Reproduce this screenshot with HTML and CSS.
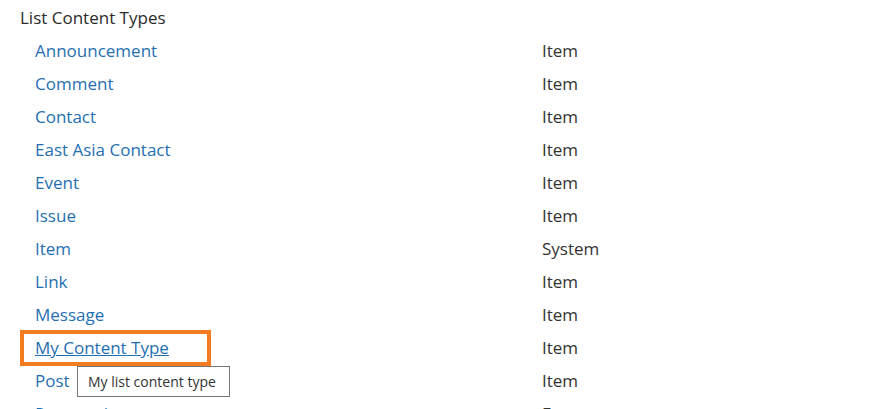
FILE: index.html
```html
<!DOCTYPE html>
<html>
<head>
<meta charset="utf-8">
<link rel="stylesheet" href="styles.css">
</head>
<body>
<div class="page">
  <h2 class="title">List Content Types</h2>
  <div class="table">
    <div class="row"><a class="name" href="#">Announcement</a><span class="parent">Item</span></div>
    <div class="row"><a class="name" href="#">Comment</a><span class="parent">Item</span></div>
    <div class="row"><a class="name" href="#">Contact</a><span class="parent">Item</span></div>
    <div class="row"><a class="name" href="#">East Asia Contact</a><span class="parent">Item</span></div>
    <div class="row"><a class="name" href="#">Event</a><span class="parent">Item</span></div>
    <div class="row"><a class="name" href="#">Issue</a><span class="parent">Item</span></div>
    <div class="row"><a class="name" href="#">Item</a><span class="parent">System</span></div>
    <div class="row"><a class="name" href="#">Link</a><span class="parent">Item</span></div>
    <div class="row"><a class="name" href="#">Message</a><span class="parent">Item</span></div>
    <div class="row"><span class="name-cell highlight"><a class="name hover" href="#">My Content Type</a><span class="tooltip">My list content type</span></span><span class="parent">Item</span></div>
    <div class="row"><a class="name" href="#">Post</a><span class="parent">Item</span></div>
    <div class="row"><a class="name" href="#">Reservations</a><span class="parent">Event</span></div>
  </div>
</div>
</body>
</html>
```
FILE: styles.css
```css
html, body {
  margin: 0;
  padding: 0;
  background: #fff;
  overflow: hidden;
  height: 409px;
}
.page {
  font-family: "Open Sans", "Noto Sans", sans-serif;
  color: #333;
  padding: 4px 0 0 20px;
}
.title {
  font-size: 17px;
  font-weight: 400;
  margin: 0;
  height: 30px;
  line-height: 28px;
  color: #2b2b2b;
}
.table {
  display: flex;
  flex-direction: column;
  padding-left: 15px;
}
.row {
  display: grid;
  grid-template-columns: 507px auto;
  height: 33px;
  align-items: center;
  font-size: 17px;
}
.name-cell {
  position: relative;
  display: flex;
  align-items: center;
  align-self: stretch;
}
.name {
  color: #1f6fb2;
  text-decoration: none;
  justify-self: start;
}
.name.hover {
  text-decoration: underline;
}
.parent {
  color: #333;
}
.highlight::before {
  content: "";
  position: absolute;
  left: -15px;
  top: -1px;
  width: 191px;
  height: 36px;
  box-sizing: border-box;
  border: 4px solid #f47c20;
}
.tooltip {
  position: absolute;
  left: 42px;
  top: 35px;
  width: 153px;
  height: 31px;
  box-sizing: border-box;
  border: 1px solid #767676;
  background: #fff;
  color: #333;
  font-size: 14px;
  line-height: 29px;
  padding-left: 10px;
  white-space: nowrap;
  z-index: 2;
}
```
